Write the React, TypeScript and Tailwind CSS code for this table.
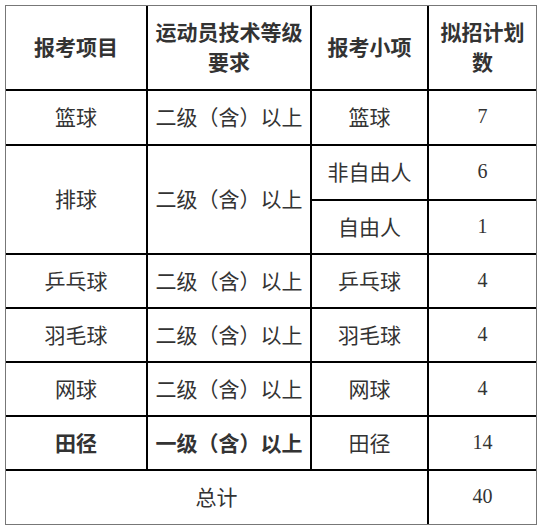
import React from 'react'

const cjk = "font-['Noto_Sans_CJK_SC',sans-serif]"
const num = "font-['Liberation_Serif',serif] text-[20px]"

function Cell({ children, className = '' }: { children: React.ReactNode; className?: string }) {
  return (
    <div className={`bg-white flex items-center justify-center text-center text-[#333] pb-[3px] ${className}`}>
      {children}
    </div>
  )
}

const rows = [
  { sport: '乒乓球', level: '二级（含）以上', item: '乒乓球', count: '4' },
  { sport: '羽毛球', level: '二级（含）以上', item: '羽毛球', count: '4' },
  { sport: '网球', level: '二级（含）以上', item: '网球', count: '4' },
]

export default function App() {
  return (
    <div className="w-[540px] h-[531px] bg-white pl-[5px] pt-[5px]">
      <div
        className={`w-[532px] border border-[#777] bg-black grid gap-[2px] grid-cols-[140px_162px_115px_107px] grid-rows-[83px_53px_53px_52px_52px_52px_52px_52px_53px] text-[21px] leading-[30px] ${cjk}`}
      >
        {/* header */}
        <Cell className="font-bold">报考项目</Cell>
        <Cell className="font-bold px-1">运动员技术等级要求</Cell>
        <Cell className="font-bold">报考小项</Cell>
        <Cell className="font-bold px-[10px]">拟招计划数</Cell>

        {/* 篮球 */}
        <Cell>篮球</Cell>
        <Cell>二级（含）以上</Cell>
        <Cell>篮球</Cell>
        <Cell className={num}>7</Cell>

        {/* 排球 */}
        <Cell className="row-span-2">排球</Cell>
        <Cell className="row-span-2">二级（含）以上</Cell>
        <Cell>非自由人</Cell>
        <Cell className={num}>6</Cell>
        <Cell>自由人</Cell>
        <Cell className={num}>1</Cell>

        {rows.map((r) => (
          <React.Fragment key={r.sport}>
            <Cell>{r.sport}</Cell>
            <Cell>{r.level}</Cell>
            <Cell>{r.item}</Cell>
            <Cell className={num}>{r.count}</Cell>
          </React.Fragment>
        ))}

        {/* 田径 */}
        <Cell className="font-bold">田径</Cell>
        <Cell className="font-bold">一级（含）以上</Cell>
        <Cell>田径</Cell>
        <Cell className={num}>14</Cell>

        {/* 总计 */}
        <Cell className="col-span-3">总计</Cell>
        <Cell className={num}>40</Cell>
      </div>
    </div>
  )
}
